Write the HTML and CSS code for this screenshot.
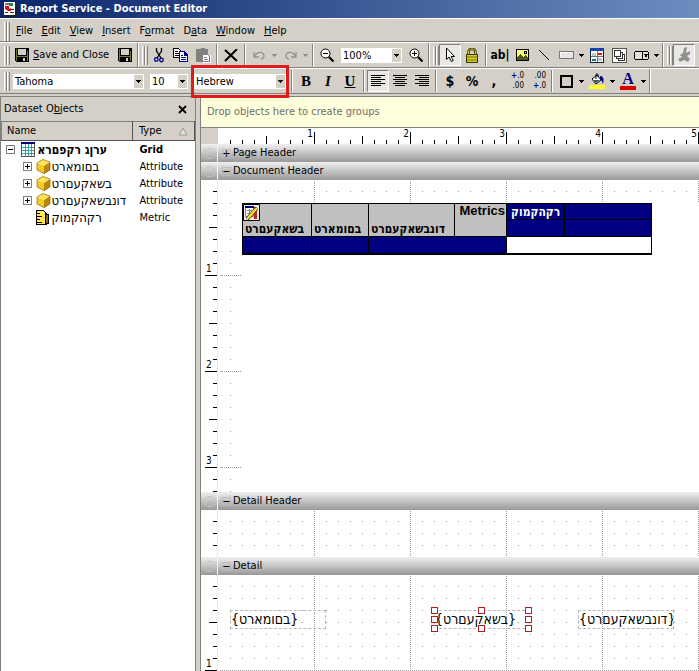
FILE: index.html
```html
<!DOCTYPE html>
<html lang="en">
<head>
    <meta charset="UTF-8">
    <meta name="viewport" content="width=device-width, initial-scale=1.0">
    <title>Report Service - Document Editor</title>
    <link rel="stylesheet" href="styles.css">
</head>
<body>
    <header class="titlebar">
        <svg width="14" height="16" viewBox="0 0 14 16"><path fill="#222" d="M3 3h11v13H3z"/><path fill="#fff" d="M1 1h11v13H1z"/><path fill="#777" d="M2 2h4v2H2z"/><path fill="#284" d="M6 2h4v3H6z"/><path fill="#d11" d="M2 5h4v3l2-1v3H5L2 8z"/><path fill="#333" d="M8 8h3v1H8zM2 11h3v1H2zM7 11h4v1H7z"/></svg>
        <h1>Report Service - Document Editor</h1>
    </header>

    <nav class="bar menu">
        <span class="grip"></span>
        <a href="#"><u>F</u>ile</a>
        <a href="#"><u>E</u>dit</a>
        <a href="#"><u>V</u>iew</a>
        <a href="#"><u>I</u>nsert</a>
        <a href="#">F<u>o</u>rmat</a>
        <a href="#">D<u>a</u>ta</a>
        <a href="#"><u>W</u>indow</a>
        <a href="#"><u>H</u>elp</a>
    </nav>

    <div class="bar">
        <div class="group">
            <span class="grip"></span>
            <button class="save" type="button"><svg class="px" width="14" height="14" viewBox="0 0 14 14"><path d="M0 0h14v14H1L0 13z"/><path fill="#77772a" d="M1 1h1v12H1zM12 3h1v10h-1zM2 8h10v1H2z"/><path fill="#d4d0c8" d="M3 1h8v6H3zM8 10h2v3H8z"/></svg><span><u>S</u>ave and Close</span></button>
            <button class="btn" type="button" aria-label="Save"><svg class="px" width="14" height="14" viewBox="0 0 14 14"><path d="M0 0h14v14H1L0 13z"/><path fill="#77772a" d="M1 1h1v12H1zM12 3h1v10h-1zM2 8h10v1H2z"/><path fill="#d4d0c8" d="M3 1h8v6H3zM8 10h2v3H8z"/></svg></button>
        </div>
        <div class="group">
            <span class="grip"></span>
            <button class="btn" type="button" aria-label="Cut"><svg width="10" height="15" viewBox="0 0 10 15" fill="none"><path stroke="#000" stroke-width="1.3" d="M2.5 0v3L7 10M7.500 0v3L3 10"/><circle cx="2.300" cy="11.500" r="1.800" stroke="#00008b" stroke-width="1.300"/><circle cx="7.500" cy="12" r="1.800" stroke="#00008b" stroke-width="1.300"/></svg></button>
            <button class="btn" type="button" aria-label="Copy"><svg class="px" width="16" height="14" viewBox="0 0 16 14"><path fill="#fff" stroke="#000" d="M.5.5h5l3 3v6h-8z"/><path stroke="#000" d="M2 3.500h3M2 5.500h4M2 7.500h4"/><path fill="#fff" stroke="#00008b" d="M6.500 3.500h5l3 3v7h-8z"/><path stroke="#00008b" d="M11.500 4v3H15M8 7.500h2M8 9.500h5M8 11.500h5"/></svg></button>
            <button class="btn" type="button" aria-label="Paste" disabled><svg class="px" width="16" height="15" viewBox="0 0 16 15"><path fill="#808080" d="M4 1h2V0h4v1h3v6H7v7H1V1z"/><path fill="#fff" d="M8 7h6l2 2v6H8z"/><path fill="none" stroke="#808080" d="M7.500 6.500h5l2 2v5h-7zM9 9.500h3M9 11.500h4"/></svg></button>
            <span class="sep"></span>
            <button class="btn" type="button" aria-label="Delete"><svg width="14" height="13" viewBox="0 0 14 13"><path fill="none" stroke="#000" stroke-width="2" d="M1 1l12 11M13 0L1 12"/></svg></button>
            <span class="sep"></span>
            <button class="btn" type="button" aria-label="Undo" disabled><svg width="13" height="9" viewBox="0 0 13 9"><path fill="none" stroke="#909090" stroke-width="1.300" d="M1 1v5h5M1 6c3-6 10-6 10-1 0 2-2 3-3 3"/></svg></button>
            <button class="drop" type="button" aria-label="Undo list" disabled><svg class="px" width="5" height="3"><path fill="#909090" d="M0 0h5v1H4v1H3v1H2V2H1V1H0z"/></svg></button>
            <button class="btn" type="button" aria-label="Redo" disabled><svg width="13" height="9" viewBox="0 0 13 9"><path fill="none" stroke="#909090" stroke-width="1.300" d="M12 1v5H7M12 6C9 0 2 0 2 5c0 2 2 3 3 3"/></svg></button>
            <button class="drop" type="button" aria-label="Redo list" disabled><svg class="px" width="5" height="3"><path fill="#909090" d="M0 0h5v1H4v1H3v1H2V2H1V1H0z"/></svg></button>
            <span class="sep"></span>
            <button class="btn" type="button" aria-label="Zoom out"><svg width="14" height="14" viewBox="0 0 14 14"><circle cx="5.500" cy="5.500" r="4.500" fill="#fff" stroke="#000"/><path stroke="#000" d="M3 5.500h5"/><path stroke="#000" stroke-width="2.200" d="M9 9l4.500 4.500"/></svg></button>
            <span class="combo zoom"><select aria-label="Zoom"><option>100%</option></select><span class="arrow"><svg class="px" width="5" height="3"><path d="M0 0h5v1H4v1H3v1H2V2H1V1H0z"/></svg></span></span>
            <button class="btn" type="button" aria-label="Zoom in"><svg width="14" height="14" viewBox="0 0 14 14"><circle cx="5.500" cy="5.500" r="4.500" fill="#fff" stroke="#000"/><path stroke="#000" d="M3 5.500h5M5.500 3v5"/><path stroke="#000" stroke-width="2.200" d="M9 9l4.500 4.500"/></svg></button>
        </div>
        <div class="group">
            <span class="grip"></span>
            <button class="btn pressed" type="button" aria-label="Select"><svg width="11" height="16" viewBox="0 0 11 16"><path fill="#fff" stroke="#000" d="M1.500 1v11.500l2.700-2.500 2 4.500 2-1-2-4h3.300z"/></svg></button>
            <button class="btn" type="button" aria-label="Lock"><svg width="14" height="15" viewBox="0 0 14 15"><path fill="none" stroke="#333300" stroke-width="2.600" d="M3.500 7V4c0-4 7-4 7 0v3"/><path fill="none" stroke="#e0d838" d="M3.500 7V4c0-4 7-4 7 0v3"/><path fill="#d8cc20" stroke="#333300" d="M1.500 6.500h11v8h-11z"/><path stroke="#777010" d="M2 9h10M2 12h10"/></svg></button>
            <span class="sep"></span>
            <button class="btn letters" type="button">ab|</button>
            <button class="btn" type="button" aria-label="Image"><svg class="px" width="13" height="12" viewBox="0 0 13 12"><path fill="#ffff80" stroke="#000" d="M.5.500h12v11H.5z"/><path fill="#55551c" d="M1 8l3-3 3 3 2-2 3 3v2H1z"/><path d="M8 2h3v3H8z"/><path fill="#fff" d="M9 3h1v1H9z"/></svg></button>
            <button class="btn" type="button" aria-label="Line"><svg width="12" height="12"><path stroke="#000" d="M1 1l10 10"/></svg></button>
            <button class="btn" type="button" aria-label="Rectangle"><svg class="px" width="15" height="8"><path fill="#e4e4e4" stroke="#777" d="M.5.500h14v7H.5z"/><path fill="none" stroke="#fff" d="M1.500 6V1.500H13"/></svg></button>
            <button class="drop" type="button" aria-label="Shapes"><svg class="px" width="5" height="3"><path d="M0 0h5v1H4v1H3v1H2V2H1V1H0z"/></svg></button>
            <button class="btn" type="button" aria-label="Grid"><svg class="px" width="14" height="15" viewBox="0 0 14 15"><path fill="#fff" stroke="#123" d="M.5.500h13v14H.5z"/><path fill="#1144aa" d="M0 0h14v3H0z"/><path fill="#b8c8d0" d="M2 5h4v3H2zM8 10h4v3H8z"/><path fill="#d11" d="M8 5h4v2H8z"/><path fill="#268" d="M2 11h4v2H2z"/><path stroke="#678" d="M7.500 3v11M1 8.500h12"/></svg></button>
            <button class="btn" type="button" aria-label="Panels"><svg class="px" width="15" height="15" viewBox="0 0 15 15"><path fill="#fff" stroke="#555" d="M.5.500h14v14H.5z"/><path fill="#fff" stroke="#333" d="M6.500 6.500h6v6h-6z"/><path fill="#fff" stroke="#333" d="M4.500 4.500h6v6h-6z"/><path fill="#fff" stroke="#333" d="M2.500 2.500h6v6h-6z"/></svg></button>
            <button class="btn" type="button" aria-label="Control"><svg class="px" width="15" height="9" viewBox="0 0 15 9"><path fill="#e4e1da" stroke="#000" d="M1.500.500h12l1 1v6l-1 1h-12l-1-1v-6zM8.500 0v9"/><path d="M10 3h4v1h-1v2h-2V4h-1z"/></svg></button>
            <button class="drop" type="button" aria-label="Controls"><svg class="px" width="5" height="3"><path d="M0 0h5v1H4v1H3v1H2V2H1V1H0z"/></svg></button>
        </div>
        <div class="group last">
            <span class="grip"></span>
            <button class="btn pressed" type="button" aria-label="Design" disabled><svg width="14" height="16" viewBox="0 0 14 16"><path fill="#909090" d="M7 1l3-1-1 6 4-2v3l-3 2 3 3-2 3-4-2-4 2-2-3 4-2-2-2 3-2z"/></svg></button>
        </div>
    </div>

    <div class="bar">
        <div class="group">
            <span class="grip"></span>
            <span class="combo font"><select aria-label="Font"><option>Tahoma</option></select><span class="arrow"><svg class="px" width="5" height="3"><path d="M0 0h5v1H4v1H3v1H2V2H1V1H0z"/></svg></span></span>
            <span class="combo size"><select aria-label="Size"><option>10</option></select><span class="arrow"><svg class="px" width="5" height="3"><path d="M0 0h5v1H4v1H3v1H2V2H1V1H0z"/></svg></span></span>
            <span class="combo script marked"><select aria-label="Script"><option>Hebrew</option></select><span class="arrow"><svg class="px" width="5" height="3"><path d="M0 0h5v1H4v1H3v1H2V2H1V1H0z"/></svg></span></span>
            <span class="sep"></span>
            <button class="btn serif" type="button">B</button>
            <button class="btn serif" type="button"><i>I</i></button>
            <button class="btn serif" type="button"><u>U</u></button>
            <span class="sep"></span>
            <button class="btn pressed" type="button" aria-label="Align left"><svg class="px" width="14" height="12"><path stroke="#000" d="M0 .5h14M0 2.500h10M0 4.500h14M0 6.500h10M0 8.500h14M0 10.500h10"/></svg></button>
            <button class="btn" type="button" aria-label="Center"><svg class="px" width="14" height="12"><path stroke="#000" d="M0 .5h14M2 2.500h10M0 4.500h14M2 6.500h10M0 8.500h14M2 10.500h10"/></svg></button>
            <button class="btn" type="button" aria-label="Align right"><svg class="px" width="14" height="12"><path stroke="#000" d="M0 .5h14M4 2.500h10M0 4.500h14M4 6.500h10M0 8.500h14M4 10.500h10"/></svg></button>
            <span class="sep"></span>
            <button class="btn sign" type="button">$</button>
            <button class="btn sign" type="button">%</button>
            <button class="btn sign" type="button">,</button>
            <button class="btn decimals" type="button"><span><b>+</b>.0</span><span>.00</span></button>
            <button class="btn decimals" type="button"><span>.00</span><span><b>+</b>.0</span></button>
            <span class="sep"></span>
            <button class="btn" type="button" aria-label="Border"><svg class="px" width="13" height="13"><path fill="none" stroke="#000" stroke-width="2" d="M1 1h11v11H1z"/></svg></button>
            <button class="drop" type="button" aria-label="Borders"><svg class="px" width="5" height="3"><path d="M0 0h5v1H4v1H3v1H2V2H1V1H0z"/></svg></button>
            <button class="btn" type="button" aria-label="Fill"><svg width="16" height="16" viewBox="0 0 16 16"><path fill="#fff" stroke="#000" d="M3 6l5-4 4 5-5 4z"/><path fill="#456" d="M4 7h7l-4 3z"/><path fill="none" stroke="#000" d="M7 6V1.500c0-1 2-1 2 0V4"/><path fill="#00008b" d="M11 3c4 0 4 4 3 8-1-2-1-4-3-5z"/><path fill="#ffff20" d="M0 12h16v4H0z"/></svg></button>
            <button class="drop" type="button" aria-label="Fill colors"><svg class="px" width="5" height="3"><path d="M0 0h5v1H4v1H3v1H2V2H1V1H0z"/></svg></button>
            <button class="btn fontcolor" type="button">A</button>
            <button class="drop" type="button" aria-label="Font colors"><svg class="px" width="5" height="3"><path d="M0 0h5v1H4v1H3v1H2V2H1V1H0z"/></svg></button>
        </div>
    </div>

    <main>
        <aside class="panel">
            <div class="panel-title">
                <h2>Dataset O<u>b</u>jects</h2>
                <button type="button" aria-label="Close"><svg width="9" height="9"><path stroke="#000" stroke-width="1.800" d="M1 1l7 7M8 1L1 8"/></svg></button>
            </div>
            <table class="tree">
                <thead>
                    <tr>
                        <th>Name</th>
                        <th class="type"><div>Type <svg width="10" height="9"><path fill="#e4e1da" stroke="#999" d="M1 8l4-7 4 7z"/></svg></div></th>
                    </tr>
                </thead>
                <tbody>
                    <tr class="root">
                        <td><div class="node">
                            <button class="toggle" type="button" aria-label="Collapse"><svg class="px" width="9" height="9"><path fill="#fff" stroke="#808080" d="M.5.500h8v8h-8z"/><path stroke="#000" d="M2 4.500h5"/></svg></button>
                            <svg class="px" width="14" height="15" viewBox="0 0 14 15"><path fill="#fff" stroke="#555" d="M.5.500h13v14H.5z"/><path stroke="#3aa0a0" d="M4.500 2v12M7.500 2v12M10.500 2v12M1 5.500h12M1 8.500h12M1 11.500h12"/><path fill="#00007b" d="M0 0h14v2H0z"/></svg>
                            <span>ערןג רקפםרא</span>
                        </div></td>
                        <td>Grid</td>
                    </tr>
                    <tr>
                        <td><div class="node child">
                            <button class="toggle" type="button" aria-label="Expand"><svg class="px" width="9" height="9"><path fill="#fff" stroke="#808080" d="M.5.500h8v8h-8z"/><path stroke="#000" d="M2 4.500h5M4.500 2v5"/></svg></button>
                            <svg width="15" height="15" viewBox="0 0 15 15"><path fill="#ffe45c" d="M1 4l6-4 7 3-6 4z"/><path fill="#f5cd22" d="M1 4l7 3v8l-7-4z"/><path fill="#b8860b" d="M8 7l6-4v8l-6 4z"/><path fill="none" stroke="#8a6a10" stroke-width=".7" d="M1 4l6-3.500L14 3v8l-6 3.500L1 11z"/></svg>
                            <span>בםומארט</span>
                        </div></td>
                        <td>Attribute</td>
                    </tr>
                    <tr>
                        <td><div class="node child">
                            <button class="toggle" type="button" aria-label="Expand"><svg class="px" width="9" height="9"><path fill="#fff" stroke="#808080" d="M.5.500h8v8h-8z"/><path stroke="#000" d="M2 4.500h5M4.500 2v5"/></svg></button>
                            <svg width="15" height="15" viewBox="0 0 15 15"><path fill="#ffe45c" d="M1 4l6-4 7 3-6 4z"/><path fill="#f5cd22" d="M1 4l7 3v8l-7-4z"/><path fill="#b8860b" d="M8 7l6-4v8l-6 4z"/><path fill="none" stroke="#8a6a10" stroke-width=".7" d="M1 4l6-3.500L14 3v8l-6 3.500L1 11z"/></svg>
                            <span>בשאקעםרט</span>
                        </div></td>
                        <td>Attribute</td>
                    </tr>
                    <tr>
                        <td><div class="node child">
                            <button class="toggle" type="button" aria-label="Expand"><svg class="px" width="9" height="9"><path fill="#fff" stroke="#808080" d="M.5.500h8v8h-8z"/><path stroke="#000" d="M2 4.500h5M4.500 2v5"/></svg></button>
                            <svg width="15" height="15" viewBox="0 0 15 15"><path fill="#ffe45c" d="M1 4l6-4 7 3-6 4z"/><path fill="#f5cd22" d="M1 4l7 3v8l-7-4z"/><path fill="#b8860b" d="M8 7l6-4v8l-6 4z"/><path fill="none" stroke="#8a6a10" stroke-width=".7" d="M1 4l6-3.500L14 3v8l-6 3.500L1 11z"/></svg>
                            <span>דונבשאקעםרט</span>
                        </div></td>
                        <td>Attribute</td>
                    </tr>
                    <tr>
                        <td><div class="node leaf">
                            <svg class="px" width="15" height="15" viewBox="0 0 15 15"><path fill="#8a6a10" stroke="#000" d="M8.500 3.500l4 1v9l-4 1z"/><path fill="#ffe45c" stroke="#000" d="M.5.500h7l2 2v12h-9z"/><path stroke="#000" d="M1 3.500h3M1 6.500h5M1 9.500h3M1 12.500h5"/></svg>
                            <span>רקהקמוק</span>
                        </div></td>
                        <td>Metric</td>
                    </tr>
                </tbody>
            </table>
        </aside>

        <section class="editor">
            <p class="dropzone">Drop objects here to create groups</p>
            <div class="ruler">
                <div class="corner"></div>
                <ol class="inches">
                    <li>1</li><li>2</li><li>3</li><li>4</li><li>5</li>
                </ol>
            </div>

            <h3 class="band"><span class="dot"></span><button type="button">+</button>Page Header</h3>
            <h3 class="band"><span class="dot"></span><button type="button">−</button>Document Header</h3>
            <div class="section document-header">
                <ol class="side"><li>1</li><li>2</li><li>3</li></ol>
                <div class="surface">
                    <div class="sheet">
                        <table class="report">
                            <colgroup>
                                <col class="c1"><col class="c2"><col class="c3"><col class="c4"><col class="c5"><col class="c6">
                            </colgroup>
                            <tr class="first">
                                <th rowspan="2"><svg class="grid-mark" width="17" height="17" viewBox="0 0 17 17"><path fill="#eee" stroke="#000" d="M.5.500h16v16H.5z"/><path fill="#fff" stroke="#888" d="M2.500 2.500h8v10h-8z"/><path fill="#00007b" d="M2 2h9v2H2z"/><path stroke="#888" d="M4 6.500h5M4 9.500h5M6.500 5v6"/><path stroke="#c22" stroke-width="3" d="M12.500 3v12"/><path stroke="#222" stroke-width="3.600" d="M4 15l10-11"/><path stroke="#ffe820" stroke-width="2.400" d="M4 15l10-11"/></svg>בשאקעםרט</th>
                                <th rowspan="2">בםומארט</th>
                                <th rowspan="2">דונבשאקעםרט</th>
                                <th rowspan="2" class="metrics">Metrics</th>
                                <td class="metric">רקהקמוק</td>
                                <td></td>
                            </tr>
                            <tr><td></td><td></td></tr>
                            <tr><td></td><td></td><td colspan="2"></td><td class="value" colspan="2"></td></tr>
                        </table>
                    </div>
                </div>
            </div>

            <h3 class="band"><span class="dot"></span><button type="button">−</button>Detail Header</h3>
            <div class="section detail-header">
                <ol class="side"></ol>
                <div class="surface"></div>
            </div>

            <h3 class="band"><span class="dot"></span><button type="button">−</button>Detail</h3>
            <div class="section detail">
                <ol class="side"><li>1</li></ol>
                <div class="surface">
                    <div class="field country">{בםומארט}</div>
                    <div class="field category">{בשאקעםרט}</div>
                    <div class="handles"><i></i><i></i><i></i><i></i><b></b><i></i><i></i><i></i><i></i></div>
                    <div class="field subcategory">{דונבשאקעםרט}</div>
                </div>
            </div>
        </section>
    </main>
</body>
</html>
```

FILE: styles.css
```css
* {
    box-sizing: border-box;
}
body {
    margin: 0;
    height: 100vh;
    display: flex;
    flex-direction: column;
    overflow: hidden;
    background-color: #d4d0c8;
    color: #000000;
    font-family: "DejaVu Sans Condensed", "DejaVu Sans", sans-serif;
    font-size: 11px;
    line-height: 14px;
}
h1, h2, h3, p, ol {
    margin: 0;
    padding: 0;
    font-size: 11px;
    font-weight: normal;
    list-style: none;
}
button, select {
    margin: 0;
    padding: 0;
    border: 0;
    background: none;
    color: inherit;
    font: inherit;
}
svg {
    display: block;
    flex: none;
}
.px {
    shape-rendering: crispEdges;
}

/* title and menu */
.titlebar {
    height: 18px;
    flex: none;
    display: flex;
    align-items: center;
    gap: 3px;
    padding-left: 3px;
    background: linear-gradient(to right, #0a246a, #6c8ebf);
    color: #ffffff;
}
.titlebar h1 {
    font-weight: bold;
}
.bar {
    height: 26px;
    flex: none;
    display: flex;
    border-top: 1px solid #ffffff;
    border-bottom: 1px solid #808080;
}
.menu {
    height: 24px;
    align-items: center;
    gap: 1px;
    padding: 2px 0 0 4px;
}
.menu a {
    padding: 0 4px;
    color: #000000;
    text-decoration: none;
}
.menu .grip {
    margin-right: 1px;
}

/* toolbars */
.group {
    display: flex;
    align-items: center;
    padding: 0 1px 0 4px;
    border-right: 1px solid #808080;
    box-shadow: 1px 0 #ffffff;
}
.group.last {
    border-right: 0;
    box-shadow: none;
}
.grip {
    width: 6px;
    height: 19px;
    background: linear-gradient(to right, #ffffff 1px, #d4d0c8 1px, #d4d0c8 2px, #808080 2px) 0 0 / 3px 100%;
}
.btn {
    width: 22px;
    height: 22px;
    display: flex;
    align-items: center;
    justify-content: center;
}
.drop {
    width: 9px;
    height: 22px;
    display: flex;
    align-items: center;
    justify-content: center;
}
.save {
    width: 104px;
    height: 22px;
    display: flex;
    align-items: center;
    gap: 4px;
    padding-left: 5px;
    white-space: nowrap;
}
.pressed {
    border: 1px solid;
    border-color: #808080 #ffffff #ffffff #808080;
    background-color: #eae8e4;
}
.sep {
    width: 2px;
    height: 22px;
    margin: 0 2px;
    border-left: 1px solid #808080;
    border-right: 1px solid #ffffff;
}
.letters {
    font-size: 12px;
    font-weight: bold;
}
.serif {
    font-family: "Liberation Serif", serif;
    font-size: 15px;
    font-weight: bold;
}
.sign {
    font-size: 14px;
    font-weight: bold;
}
.decimals {
    flex-direction: column;
    align-items: flex-end;
    padding-right: 3px;
    font-size: 8px;
    line-height: 10px;
}
.decimals b {
    color: #00008b;
}
.fontcolor {
    width: 16px;
    height: 18px;
    margin: 0 3px;
    border-bottom: 4px solid #e00000;
    color: #00007b;
    font-family: "Liberation Serif", serif;
    font-size: 16px;
    font-weight: bold;
}
.combo {
    height: 15px;
    display: flex;
    margin: 0 3px;
    padding: 1px;
    background-color: #ffffff;
}
.combo select {
    flex: 1;
    min-width: 0;
    padding-left: 1px;
    appearance: none;
}
.arrow {
    width: 9px;
    display: flex;
    align-items: center;
    justify-content: center;
    background-color: #d4d0c8;
}
.zoom {
    width: 61px;
}
.font {
    width: 131px;
}
.size {
    width: 38px;
}
.script {
    width: 92px;
}
.marked {
    position: relative;
}
.marked::after {
    content: "";
    position: absolute;
    inset: -9px -3px;
    z-index: 2;
    border: 3px solid #dd1c1c;
    pointer-events: none;
}

main {
    flex: 1;
    min-height: 0;
    display: flex;
    gap: 5px;
    padding-top: 2px;
}

/* dataset objects */
.panel {
    width: 196px;
    flex: none;
    border: 1px solid #808080;
    border-bottom: 0;
    background-color: #ffffff;
}
.panel-title {
    height: 24px;
    display: flex;
    align-items: center;
    justify-content: space-between;
    padding: 0 8px 0 3px;
    background-color: #d4d0c8;
}
.tree {
    width: 100%;
    border-collapse: collapse;
    table-layout: fixed;
}
.tree th {
    height: 19px;
    padding: 0 0 0 5px;
    border: 1px solid;
    border-color: #808080 #555555 #555555 #808080;
    background-color: #d4d0c8;
    font-weight: normal;
    text-align: left;
}
.tree .type {
    width: 62px;
    padding-left: 6px;
}
.type div {
    display: flex;
    align-items: center;
    justify-content: space-between;
    padding-right: 6px;
}
.tree td {
    height: 17px;
    padding: 0 0 0 7px;
}
.tree .root td {
    font-weight: bold;
}
.tree td:first-child {
    padding: 0;
}
.node {
    height: 17px;
    display: flex;
    align-items: center;
    gap: 3px;
    padding-left: 4px;
    font-size: 13px;
    white-space: nowrap;
}
.root .node {
    font-size: 12px;
}
.node .toggle {
    margin-right: 3px;
}
.child {
    gap: 1px;
    padding-left: 21px;
}
.leaf {
    gap: 1px;
    padding-left: 34px;
}

/* document canvas */
.editor {
    flex: 1;
    min-width: 0;
    display: flex;
    flex-direction: column;
    border-top: 1px solid #808080;
    box-shadow: -1px 0 #808080;
    background-color: #ffffff;
}
.dropzone {
    height: 31px;
    flex: none;
    padding: 8px 6px;
    border-bottom: 1px solid #808080;
    background-color: #ffffdc;
    color: #6f6f68;
}
.ruler {
    height: 16px;
    flex: none;
    display: flex;
}
.corner {
    width: 17px;
    margin-right: 1px;
    background-color: #d4d0c8;
}
.inches {
    flex: 1;
    min-width: 0;
    display: flex;
    overflow: hidden;
    font-size: 10px;
    line-height: 12px;
    background:
        linear-gradient(to right, transparent 95px, #000000 95px) 0 100% / 96px 12px repeat-x,
        linear-gradient(to right, transparent 47px, #000000 47px, #000000 48px, transparent 48px) 0 100% / 96px 8px repeat-x,
        linear-gradient(to right, transparent 11px, #000000 11px) 0 100% / 12px 4px repeat-x;
}
.inches li {
    width: 96px;
    flex: none;
    padding-right: 2px;
    text-align: right;
}
.band {
    height: 18px;
    flex: none;
    display: flex;
    align-items: center;
    background: linear-gradient(#f0f0f0, #989898);
}
.dot {
    width: 17px;
    height: 18px;
    display: flex;
    align-items: center;
    justify-content: center;
    border-right: 1px solid #f4f4f4;
}
.dot::after {
    content: "";
    width: 9px;
    height: 9px;
    border: 1px solid #c4c4c4;
    border-radius: 5px;
}
.band button {
    width: 9px;
    height: 9px;
    margin: 0 2px 0 4px;
    border: 1px solid #bcbcbc;
    line-height: 7px;
    display: flex;
    align-items: center;
    justify-content: center;
}
.section {
    flex: none;
    display: flex;
}
.side {
    width: 17px;
    margin-right: 1px;
    border-right: 1px solid #e8e8e8;
    font-size: 10px;
    line-height: 12px;
    background:
        linear-gradient(transparent 95px, #000000 95px) 100% 0 / 12px 96px repeat-y,
        linear-gradient(transparent 47px, #000000 47px, #000000 48px, transparent 48px) 100% 0 / 8px 96px repeat-y,
        linear-gradient(transparent 11px, #000000 11px) 100% 0 / 4px 12px repeat-y;
}
.side li {
    height: 96px;
    padding: 83px 0 0 5px;
}
.surface {
    flex: 1;
    min-width: 0;
    position: relative;
    overflow: hidden;
    background:
        conic-gradient(at 95px 1px, transparent 25%, #999999 0 50%, transparent 0) 0 0 / 96px 2px,
        conic-gradient(at 1px 95px, transparent 25%, #999999 0 50%, transparent 0) 0 0 / 2px 96px,
        conic-gradient(at 11px 11px, transparent 25%, #999999 0 50%, transparent 0) 0 0 / 12px 12px;
}
.document-header {
    height: 312px;
}
.document-header .surface {
    padding: 23px 0 0 23px;
}
.sheet {
    height: 100%;
    background-color: #ffffff;
}
.detail-header {
    height: 47px;
}
.detail {
    flex: 1;
    min-height: 0;
    overflow: hidden;
}

.report {
    width: 410px;
    border-collapse: collapse;
    table-layout: fixed;
    border: 1px solid #000000;
    border-bottom-width: 2px;
    font-size: 12px;
    white-space: nowrap;
}
.c1 { width: 69px; }
.c2 { width: 57px; }
.c3 { width: 86px; }
.c4 { width: 52px; }
.c5 { width: 58px; }
.c6 { width: 87px; }
.report th, .report td {
    padding: 0 2px;
    border: 1px solid #000000;
    font-weight: bold;
}
.report th {
    position: relative;
    background-color: #c0c0c0;
    text-align: left;
    vertical-align: bottom;
}
.report .metrics {
    padding-right: 1px;
    font-family: "Liberation Sans", sans-serif;
    font-size: 13px;
    text-align: right;
    vertical-align: top;
}
.report td {
    height: 17px;
    background-color: #000080;
    color: #ffffff;
}
.report .first td {
    height: 16px;
}
.report .metric {
    padding-left: 4px;
    text-align: left;
}
.report .value {
    background-color: #ffffff;
}
.grid-mark {
    position: absolute;
    left: 0;
    top: 0;
}

.field {
    position: absolute;
    top: 35px;
    width: 96px;
    height: 19px;
    border: 1px dashed #b8b8b8;
    overflow: hidden;
    font-size: 14px;
    line-height: 17px;
    white-space: nowrap;
}
.country {
    left: 11px;
}
.category {
    left: 215px;
}
.subcategory {
    left: 359px;
}
.handles {
    position: absolute;
    left: 212px;
    top: 32px;
    width: 101px;
    height: 25px;
    display: grid;
    grid-template-columns: repeat(3, 7px);
    justify-content: space-between;
    align-content: space-between;
}
.handles i {
    width: 7px;
    height: 7px;
    border: 1px solid #b02020;
    background-color: #ffffff;
}
```
